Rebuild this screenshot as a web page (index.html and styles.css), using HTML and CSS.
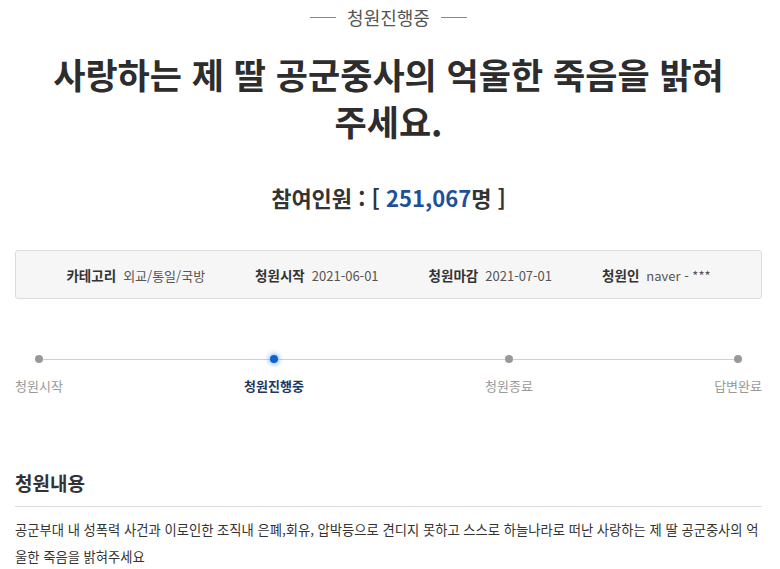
FILE: index.html
```html
<!DOCTYPE html>
<html lang="ko">
<head>
    <meta charset="UTF-8">
    <title>청원 상세</title>
    <meta name="viewport" content="width=device-width, initial-scale=1.0">
    <link rel="stylesheet" href="styles.css">
</head>
<body>
    <div class="petition">
        <!-- Status label -->
        <div class="status"><span class="status-text">청원진행중</span></div>

        <h1 class="title">사랑하는 제 딸 공군중사의 억울한 죽음을 밝혀 주세요.</h1>

        <p class="count">참여인원 : [ <span class="count-num">251,067</span>명 ]</p>

        <!-- Meta info box -->
        <ul class="info">
            <li><b>카테고리</b>외교/통일/국방</li>
            <li><b>청원시작</b>2021-06-01</li>
            <li><b>청원마감</b>2021-07-01</li>
            <li><b>청원인</b>naver - ***</li>
        </ul>

        <!-- Progress steps -->
        <ol class="steps">
            <li class="step"><span class="dot"></span><span class="step-label">청원시작</span></li>
            <li class="step active"><span class="dot"></span><span class="step-label">청원진행중</span></li>
            <li class="step"><span class="dot"></span><span class="step-label">청원종료</span></li>
            <li class="step"><span class="dot"></span><span class="step-label">답변완료</span></li>
        </ol>

        <h2 class="section-title">청원내용</h2>
        <p class="content">공군부대 내 성폭력 사건과 이로인한 조직내 은폐,회유, 압박등으로 견디지 못하고 스스로 하늘나라로 떠난 사랑하는 제 딸 공군중사의 억울한 죽음을 밝혀주세요</p>
    </div>
</body>
</html>
```

FILE: styles.css
```css
/* Petition detail page */
body {
    margin: 0;
    background: #fff;
    color: #333;
    font-family: "Noto Sans CJK KR", "Noto Sans", sans-serif;
}
.petition {
    padding: 5px 18px 0 15px;
}
.status {
    display: flex;
    justify-content: center;
    align-items: center;
    gap: 11px;
    height: 24px;
    color: #555;
    font-size: 18px;
}
.status::before,
.status::after {
    content: "";
    width: 26px;
    height: 1px;
    background: #888;
}
.title {
    margin: 21px 0 0;
    text-align: center;
    font-size: 35px;
    line-height: 47px;
    font-weight: 700;
    color: #2d2d2d;
    word-break: keep-all;
}
.count {
    margin: 38px 0 0;
    text-align: center;
    font-size: 22px;
    line-height: 30px;
    font-weight: 700;
    color: #333;
}
.count-num {
    color: #1d4f9c;
}
.info {
    list-style: none;
    margin: 38px 0 0;
    padding: 0;
    height: 47px;
    display: flex;
    justify-content: center;
    align-items: center;
    gap: 50px;
    background: #f6f6f6;
    border: 1px solid #dcdcdc;
    border-radius: 3px;
    font-size: 13px;
    color: #555;
}
.info b {
    color: #333;
    font-size: 13.5px;
    margin-right: 7px;
}
.steps {
    position: relative;
    list-style: none;
    margin: 56px 0 0;
    padding: 0;
    display: flex;
    justify-content: space-between;
}
/* connector line behind the dots */
.steps::before {
    content: "";
    position: absolute;
    top: 4px;
    left: 24px;
    right: 25px;
    height: 1px;
    background: #d0d0d0;
}
.step {
    position: relative;
    display: flex;
    flex-direction: column;
    align-items: center;
    gap: 14px;
}
.dot {
    width: 8px;
    height: 8px;
    border-radius: 50%;
    background: #999;
}
.step-label {
    font-size: 13px;
    line-height: 18px;
    color: #999;
}
.step.active .dot {
    background: #0a63d1;
    box-shadow: 0 0 4px 2px rgba(60, 140, 255, 0.45);
}
.step.active .step-label {
    color: #1c3763;
    font-weight: 700;
}
.section-title {
    margin: 75px 0 0;
    padding-bottom: 10px;
    border-bottom: 1px solid #dcdcdc;
    font-size: 19px;
    line-height: 26px;
    font-weight: 700;
    color: #333;
}
.content {
    margin: 9px 0 0;
    font-size: 13.3px;
    line-height: 27px;
    color: #333;
}
```
